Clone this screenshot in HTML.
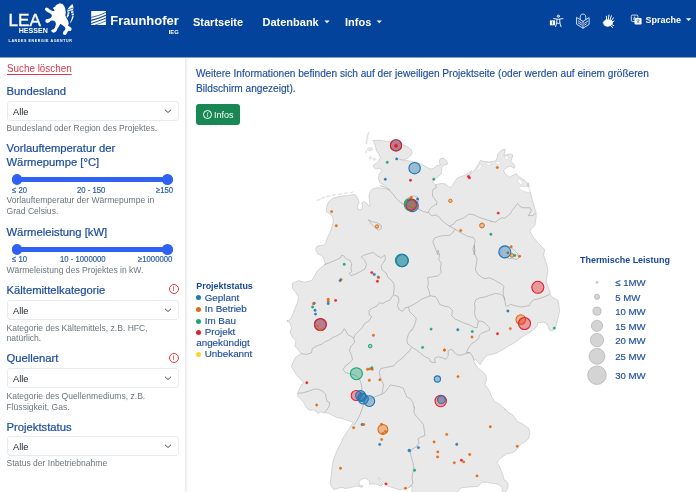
<!DOCTYPE html>
<html lang="de">
<head>
<meta charset="utf-8">
<title>Wärmepumpen Datenbank</title>
<style>
*{box-sizing:border-box;margin:0;padding:0}
html,body{width:696px;height:492px;overflow:hidden;background:#fff}
body{font-family:"Liberation Sans",sans-serif;color:#212529;position:relative}
#wrap{position:absolute;left:0;top:0;width:696px;height:492px;overflow:hidden;will-change:transform}
.abs{position:absolute;white-space:nowrap;line-height:1}
#nav{position:absolute;left:0;top:0;width:696px;height:57px;background:#04439b;z-index:5;box-shadow:0 1px 0 #82a1cd}
#nav .t{color:#fff;font-weight:700;font-size:11px}
#side{position:absolute;left:0;top:57px;width:185px;height:435px;background:#fff;box-shadow:1px 0 3px rgba(0,0,0,.13)}
.lbl{color:#1c4d9e;font-size:11.25px;-webkit-text-stroke:0.22px #1c4d9e}
.help{color:#6c757d;font-size:8.55px}
.sel{position:absolute;left:6.5px;width:172px;height:19.7px;border:1px solid #e8ebee;border-radius:3px;background:#fff}
.sel span{position:absolute;left:5.9px;top:4.7px;font-size:9.9px;transform:scaleX(0.94);transform-origin:0 0;line-height:1;color:#212529}
.sel svg{position:absolute;left:156.5px;top:7.2px}
.track{position:absolute;left:12px;width:161px;height:4.4px;background:#2f62f3;border-radius:2px}
.thumb{position:absolute;width:10.6px;height:10.6px;border-radius:50%;background:#2f62f3}
.sl{color:#285bb0;font-size:8.8px;-webkit-text-stroke:0.2px #285bb0;transform:scaleX(0.88);transform-origin:0 0}
.info{position:absolute;width:10px;height:10px;border:1px solid #e03a3a;border-radius:50%;color:#e03a3a;font-size:8px;line-height:8px;text-align:center;font-weight:400}
.main{color:#1c4d9e;font-size:10.14px;-webkit-text-stroke:0.15px #1c4d9e}
.lg{color:#1c4d9e;font-size:9.85px;-webkit-text-stroke:0.15px #1c4d9e}
.lgb{color:#17479b;font-size:8.95px;font-weight:700}
.dot{position:absolute;width:5px;height:5px;border-radius:50%}
</style>
</head>
<body>
<div id="wrap">
<div id="nav">
  <!-- LEA Hessen logo -->
  <svg class="abs" style="left:0;top:0" width="90" height="57" viewBox="0 0 90 57">
    <text x="8.6" y="25.9" font-family="Liberation Sans, sans-serif" font-size="15.6" fill="#fff" stroke="#fff" stroke-width="0.35" textLength="32.4" lengthAdjust="spacingAndGlyphs">LEA</text>
    <text x="18.7" y="33" font-family="Liberation Sans, sans-serif" font-size="6.5" font-weight="700" fill="#fff" textLength="29.2" lengthAdjust="spacingAndGlyphs">HESSEN</text>
    <text x="8.6" y="41.9" font-family="Liberation Sans, sans-serif" font-size="3.6" font-weight="700" fill="#fff" textLength="63.3" lengthAdjust="spacing">LANDES ENERGIE AGENTUR</text>
    <g fill="#fff"><path d="M57.73,4.29 L59.92,3.19 L62.48,3.93 L63.95,5.75 L65.04,7.95 L65.56,10.51 L65.77,13.07 L65.26,15.26 L65.99,17.09 L67.24,19.29 L68.34,21.48 L68.70,23.68 L67.97,25.51 L69.43,26.60 L71.26,27.70 L71.63,29.53 L70.53,30.99 L68.70,30.63 L67.60,31.72 L66.87,33.55 L65.41,35.02 L63.58,34.65 L62.85,33.19 L63.58,31.36 L65.04,29.90 L65.41,28.07 L64.31,26.60 L62.85,25.51 L61.39,24.41 L60.29,23.68 L59.56,25.14 L58.46,26.97 L57.36,28.80 L56.63,30.63 L55.53,32.09 L53.70,32.82 L51.88,32.09 L51.14,30.63 L52.24,29.53 L53.70,29.16 L54.80,27.70 L55.53,25.87 L55.90,24.04 L55.53,22.21 L54.44,21.12 L52.61,20.39 L50.78,20.75 L49.32,22.21 L47.49,22.95 L45.66,22.21 L45.29,20.75 L46.02,19.29 L47.85,18.92 L49.68,18.56 L51.14,17.46 L51.88,16.00 L51.51,14.53 L50.41,13.44 L48.95,12.70 L47.49,11.97 L46.02,10.88 L44.93,9.41 L45.29,7.95 L46.75,7.58 L48.22,8.32 L49.68,9.41 L51.14,10.51 L52.97,10.88 L54.44,10.88 L54.07,9.41 L52.97,8.32 L53.70,7.22 L55.17,6.85 L55.53,5.75 L56.63,4.66Z"/><path d="M66.51,16.73 L67.24,14.90 L67.60,12.70 L67.24,10.51 L67.97,8.68 L69.43,6.85 L71.26,5.02 L72.36,3.93 L73.09,5.39 L73.46,7.58 L73.09,9.78 L73.46,11.97 L73.82,14.53 L73.46,17.09 L72.72,19.29 L71.63,21.12 L70.90,22.95 L70.16,22.21 L70.90,20.39 L71.63,18.56 L71.99,16.36 L71.63,14.17 L70.90,11.97 L70.16,10.14 L69.43,11.61 L69.43,13.80 L68.70,16.00 L67.60,17.83Z"/><path d="M67.60,9.92 L73.31,8.02" stroke="#04439b" stroke-width="0.75" fill="none"/><path d="M67.75,12.12 L73.60,10.36" stroke="#04439b" stroke-width="0.75" fill="none"/><path d="M68.48,14.31 L73.97,12.85" stroke="#04439b" stroke-width="0.75" fill="none"/><path d="M69.21,16.51 L73.89,15.48" stroke="#04439b" stroke-width="0.75" fill="none"/></g>
  </svg>
  <!-- Fraunhofer logo -->
  <svg class="abs" style="left:90px;top:0" width="95" height="57" viewBox="90 0 95 57">
    <rect x="91.2" y="11" width="14.7" height="14" fill="#fff"/>
    <g stroke="#04439b" fill="none" stroke-linecap="butt">
      <path d="M91.2,17.4 Q99,16 105.9,12.4" stroke-width="0.8"/>
      <path d="M91.2,20.4 Q99,18.4 105.9,15.3" stroke-width="1.1"/>
      <path d="M91.2,23.6 Q99,20.8 105.9,18.2" stroke-width="1.0"/>
      <path d="M95.2,25 Q101,23 105.9,21" stroke-width="0.7"/>
    </g>
    <text x="110.3" y="24.8" font-family="Liberation Sans, sans-serif" font-size="12.2" font-weight="700" fill="#fff" textLength="68.4" lengthAdjust="spacingAndGlyphs">Fraunhofer</text>
    <text x="168.7" y="33.7" font-family="Liberation Sans, sans-serif" font-size="5.2" font-weight="700" fill="#fff" textLength="10" lengthAdjust="spacingAndGlyphs">IEG</text>
  </svg>
  <svg class="abs" style="left:320px;top:0" width="376" height="57" viewBox="320 0 376 57">
    <g fill="#fff">
      <path d="M324.4,20.6 h5.2 l-2.6,2.7z"/>
      <path d="M376.6,20.6 h5.2 l-2.6,2.7z"/>
      <path d="M686,18.3 h5.2 l-2.6,2.6z"/>
    </g>
    <!-- accessibility -->
    <g>
      <rect x="549.9" y="20.4" width="5.2" height="4.9" fill="#fff"/>
      <rect x="552.2" y="21.3" width="0.7" height="3.1" fill="#04439b"/>
      <g stroke="#fff" fill="none" stroke-width="0.9" stroke-linecap="round" stroke-linejoin="round">
        <circle cx="558.3" cy="16.2" r="1.1"/>
        <path d="M553.6,18.6 L558.3,19.3 L562.9,18.6"/>
        <path d="M556.9,19.4 L556.7,23 L555.6,26.6 M559.7,19.4 L559.9,23 L561,26.6 M556.8,23 Q558.3,24.3 559.8,23"/>
      </g>
    </g>
    <!-- easy-read book -->
    <g stroke="#fff" fill="none" stroke-width="0.8" stroke-linejoin="round" stroke-linecap="round">
      <path d="M576.9,17.6 L583,21.4 L589.1,17.6 L589.1,24.4 L583,28.2 L576.9,24.4 Z"/>
      <path d="M583,21.4 L583,28.2"/>
      <path d="M580.2,19.4 Q579.6,14 583,14 Q586.4,14 585.8,19.4"/>
      <path d="M578.4,21 L581.6,23 M578.4,23 L581.6,25 M584.6,23.2 L587.6,21.2 M584.6,25 L586.4,23.9"/>
    </g>
    <!-- sign language hands -->
    <g fill="#fff" stroke="#fff" stroke-linecap="round" stroke-linejoin="round">
      <path d="M603.2,22.2 L606,19.6 L610.6,20.2 L612.6,21.4 L612.4,23.6 L610.8,25.6 L607.4,26.6 L604.6,25.4 Z" stroke-width="0.6"/>
      <g stroke-width="1" fill="none">
        <path d="M606.6,20.4 L606.4,16.2 M608.2,20.2 L609,15 M609.8,20.4 L611.4,15.8 M611,21.2 L613.4,17.8 M612,22.6 L614,21"/>
        <path d="M610.6,25.6 L612.6,27.4 M611.8,24.6 L613.8,25.6"/>
      </g>
    </g>
    <!-- translate -->
    <g>
      <rect x="631.3" y="15.1" width="6.6" height="6.4" rx="1.2" fill="none" stroke="#fff" stroke-width="0.8"/>
      <rect x="634.5" y="18" width="7.1" height="6.5" rx="1.2" fill="#fff"/>
      <path d="M633.4,19.8 L634.6,16.6 L635.8,19.8 M633.8,18.8 h1.6" stroke="#fff" stroke-width="0.6" fill="none"/>
      <path d="M636.4,20 h3.4 M638.1,19.3 v0.7 M639.2,20 Q638.6,22 636.6,23 M637,20.8 Q637.8,22.2 639.6,23" stroke="#04439b" stroke-width="0.5" fill="none"/>
    </g>
  </svg>
  <div class="abs t" id="n1" style="left:193px;top:17.14px">Startseite</div>
  <div class="abs t" id="n2" style="left:262.5px;top:17.14px">Datenbank</div>
  <div class="abs t" id="n3" style="left:345px;top:17.14px">Infos</div>
  <div class="abs t" id="n4" style="left:645.6px;top:15.9px;font-size:9px">Sprache</div>
</div>

<div id="side">
  <div class="abs" id="s_clear" style="left:6.5px;top:5.5px;font-size:11.3px;color:#dc3545;text-decoration:underline;text-decoration-thickness:0.8px;text-underline-offset:1.6px;transform:scaleX(0.872);transform-origin:0 0">Suche löschen</div>
  <div class="abs lbl" id="l1" style="left:6.5px;top:29.24px">Bundesland</div>
  <div class="sel" style="top:44.3px"><span>Alle</span><svg width="8" height="5" viewBox="0 0 8 5"><path d="M1.2 1 L4 3.5 L6.8 1" fill="none" stroke="#343a40" stroke-width="0.9" stroke-linecap="round" stroke-linejoin="round"/></svg></div>
  <div class="abs help" id="h1" style="left:6.5px;top:67.06px">Bundesland oder Region des Projektes.</div>

  <div class="abs lbl" id="l2a" style="left:6.5px;top:86.28px">Vorlauftemperatur der</div>
  <div class="abs lbl" id="l2b" style="left:6.5px;top:99.88px">Wärmepumpe [°C]</div>
  <div class="track" style="top:120.2px"></div><div class="thumb" style="left:11.9px;top:117.1px"></div><div class="thumb" style="left:162.3px;top:117.1px"></div>
  <div class="abs sl" id="sl1a" style="left:12px;top:128.6px">≤ 20</div>
  <div class="abs sl" id="sl1b" style="left:77px;top:128.6px">20 - 150</div>
  <div class="abs sl" id="sl1c" style="left:156px;top:128.6px">≥150</div>
  <div class="abs help" id="h2a" style="left:6.5px;top:139.46px">Vorlauftemperatur der Wärmepumpe in</div>
  <div class="abs help" id="h2b" style="left:6.5px;top:149.86px">Grad Celsius.</div>

  <div class="abs lbl" id="l3" style="left:6.5px;top:169.78px">Wärmeleistung [kW]</div>
  <div class="track" style="top:190.2px"></div><div class="thumb" style="left:11.9px;top:187.1px"></div><div class="thumb" style="left:162.3px;top:187.1px"></div>
  <div class="abs sl" id="sl2a" style="left:12px;top:198.1px">≤ 10</div>
  <div class="abs sl" id="sl2b" style="left:59.7px;top:198.1px">10 - 1000000</div>
  <div class="abs sl" id="sl2c" style="left:137.5px;top:198.1px">≥1000000</div>
  <div class="abs help" id="h3" style="left:6.5px;top:209.36px">Wärmeleistung des Projektes in kW.</div>

  <div class="abs lbl" id="l4" style="left:6.5px;top:227.88px">Kältemittelkategorie</div>
  <div class="info" style="left:168.6px;top:227px">i</div>
  <div class="sel" style="top:243.3px"><span>Alle</span><svg width="8" height="5" viewBox="0 0 8 5"><path d="M1.2 1 L4 3.5 L6.8 1" fill="none" stroke="#343a40" stroke-width="0.9" stroke-linecap="round" stroke-linejoin="round"/></svg></div>
  <div class="abs help" id="h4a" style="left:6.5px;top:267.26px">Kategorie des Kältemittels, z.B. HFC,</div>
  <div class="abs help" id="h4b" style="left:6.5px;top:277.36px">natürlich.</div>

  <div class="abs lbl" id="l5" style="left:6.5px;top:296.48px">Quellenart</div>
  <div class="info" style="left:168.6px;top:295.8px">i</div>
  <div class="sel" style="top:311px"><span>Alle</span><svg width="8" height="5" viewBox="0 0 8 5"><path d="M1.2 1 L4 3.5 L6.8 1" fill="none" stroke="#343a40" stroke-width="0.9" stroke-linecap="round" stroke-linejoin="round"/></svg></div>
  <div class="abs help" id="h5a" style="left:6.5px;top:334.76px">Kategorie des Quellenmediums, z.B.</div>
  <div class="abs help" id="h5b" style="left:6.5px;top:345.66px">Flüssigkeit, Gas.</div>

  <div class="abs lbl" id="l6" style="left:6.5px;top:364.78px">Projektstatus</div>
  <div class="sel" style="top:379.2px"><span>Alle</span><svg width="8" height="5" viewBox="0 0 8 5"><path d="M1.2 1 L4 3.5 L6.8 1" fill="none" stroke="#343a40" stroke-width="0.9" stroke-linecap="round" stroke-linejoin="round"/></svg></div>
  <div class="abs help" id="h6" style="left:6.5px;top:402.46px">Status der Inbetriebnahme</div>
</div>

<div class="abs main" id="m1" style="left:196px;top:68.75px">Weitere Informationen befinden sich auf der jeweiligen Projektseite (oder werden auf einem größeren</div>
<div class="abs main" id="m2" style="left:196px;top:83.8px">Bildschirm angezeigt).</div>
<div class="abs" id="btn" style="left:196px;top:104.2px;width:43.9px;height:20.5px;background:#198754;border-radius:3px;color:#fff;font-size:9px"><span style="position:absolute;left:18px;top:6.4px">Infos</span><span style="position:absolute;left:6.9px;top:5.9px;width:9px;height:9px;border:0.9px solid #fff;border-radius:50%;font-size:6.5px;line-height:7.2px;text-align:center;font-style:italic">i</span></div>

<svg class="abs" id="map" style="left:0;top:0" width="696" height="492" viewBox="0 0 696 492">
  <g fill="#e9e9e9" stroke="#b4b4b4" stroke-width="0.5" stroke-linejoin="round">
    <path d="M373.2,140.5 L380.1,140.2 L387,141.4 L395.6,142.6 L401.4,143.5 L407.8,147.1 L411.4,149.9 L412.1,153.5 L409.9,156.3 L407.1,158.5 L403.5,159.9 L399.3,159.2 L403.5,160.7 L407.1,160.6 L410.6,161.3 L414.9,162 L421.3,164.2 L426.3,167 L430.6,169.1 L433.4,168.4 L437,165.6 L440.5,164.9 L439.1,161.3 L440.5,158.5 L444.1,158.5 L446.9,161.3 L447.6,164.2 L444.1,164.9 L441.9,167 L441.7,170.6 L441.2,174.1 L437.7,177 L434.1,179.1 L432.7,181.9 L435.5,184.8 L437.7,184.1 L441.9,183.4 L445.5,184.1 L448.3,186.2 L451.2,187.6 L453.3,184.1 L455.5,180.5 L457.6,177.7 L461.9,176.3 L466.1,174.8 L469,172.7 L471.8,170.6 L470,174.7 L474.6,170.1 L478.1,164.9 L480.4,160.3 L483.9,161.4 L488.5,162 L493.1,161.4 L496,160.8 L497.2,157.4 L497.8,153.9 L500.1,151.6 L502.4,149.8 L505.3,149.3 L504.7,152.7 L503.8,155.6 L507,154.5 L510.5,153.9 L512.8,155 L511.9,158.5 L510.7,161.4 L513.4,163.7 L515.1,166 L514,168.4 L511.7,166.9 L509.4,166.4 L507,167.5 L505.3,168.9 L503.6,170.3 L504.7,173 L507,175.3 L508.8,177.6 L511.7,175.9 L514.6,174.4 L516.3,173.6 L518.6,176.5 L522.1,178.8 L525.6,181.1 L528.4,184 L529.6,186.3 L527.9,187.5 L528.4,182.8 L527.3,186.4 L530.5,192.8 L532,198.5 L533.4,203.5 L534.8,208.4 L536.2,212.7 L536.2,217 L535.5,221.3 L534.8,225.5 L532,228.4 L529.8,230.5 L531.3,234.1 L534.1,238.3 L537.7,242.6 L541.2,246.1 L544.8,250 L544.5,250.2 L543.6,255.4 L545.4,260.5 L547.1,265.7 L547.9,270.9 L547.1,276.1 L546.2,281.3 L547.9,286.5 L549.7,290.8 L550.5,295.1 L553,297.5 L557.6,299.9 L559,305.6 L559.5,311.3 L558.3,317 L556.9,322.7 L555.5,326.9 L554.1,329.8 L551.2,330.9 L549.1,329.8 L548.1,326.2 L546.2,323.4 L543.4,322 L540.5,322.7 L537.7,322.4 L537.3,325.5 L535.6,327.7 L533.4,329.8 L530.6,331.9 L527.7,333.8 L524.2,335.5 L521.3,337.6 L518.5,339.7 L515,342.4 L511.1,344.7 L507.4,346.6 L503.8,349 L500.4,350.9 L496.1,353.5 L491.8,354.4 L487.5,355.2 L484,358.7 L481.5,362.1 L480.1,364.7 L478,362.1 L475.4,359.5 L473.7,361.3 L476.3,365.6 L478.9,369 L482.3,371.6 L485.8,375.1 L486.6,379.4 L484.9,384.6 L487.5,388 L490.1,392.4 L491.8,397.5 L495.3,401.9 L499.6,404.4 L503.9,407.9 L505.6,410 L504.8,408.7 L508.2,412.2 L512.5,414.8 L515.1,418.2 L517.7,421.7 L522,423.4 L525.5,426 L528.9,428.6 L529.8,432.9 L528.9,438.1 L525.5,441.5 L522,443.3 L518.6,446.7 L516,450.2 L512.5,452.8 L507.4,453.6 L503,456.2 L498.7,459.7 L497,463.1 L499.6,466.6 L501.3,470.9 L503,475.2 L503.9,479.5 L506.5,481.3 L508.2,484.7 L507.4,489 L505.6,492 L505.6,492 L504,497 L502,497 L502.4,488.1 L498.9,484.5 L494.4,483.6 L489.1,482.8 L483.7,481.9 L481.1,482.8 L478.4,486.3 L473,486.7 L466.8,487.2 L460.6,488.1 L457,492 L455,497 L412,497 L412,485.9 L407.6,488.1 L403.3,489.1 L399,489.7 L396.1,488.8 L391.8,487.4 L387.5,485.9 L385.4,484.2 L381.8,480.9 L378.9,477.3 L378.2,478 L380.3,481.6 L383.2,484.5 L380.3,485.9 L377.5,484.5 L373.2,483.8 L369.6,484.5 L369.6,481.6 L368.1,479.5 L364.5,478 L360.9,479.5 L358.8,482.3 L359.5,485.2 L363.1,485.9 L361.7,487.6 L358.1,485.9 L354.5,486.6 L350.2,487.6 L345.9,488.5 L341.6,487.4 L337.2,488.5 L333.6,489.5 L331.5,486.6 L330.1,483 L330.8,478.7 L331.5,473 L332.2,467.2 L332.9,461.5 L335.1,455.7 L337.2,450 L340.4,444.1 L343,438.1 L346.4,432.9 L349.9,427.7 L353.3,422.5 L349.7,421.1 L345.4,419.7 L341.2,418.3 L336.9,417.6 L332.6,415.5 L328.4,413.3 L324.1,412.6 L320.5,411.9 L317.7,413.3 L316.3,411.2 L313.4,409.8 L310.6,410.5 L307.7,409.1 L305.6,406.2 L303.5,401.9 L300.6,399.1 L297.8,396.3 L297.8,393.4 L299.2,389.1 L301.3,385.6 L303.5,382.7 L301.3,379.9 L298.5,377 L295.6,373.5 L293.5,369.9 L291.4,366.4 L293.3,361.5 L295.9,357.1 L301.1,353.7 L298.5,350.2 L295,345.9 L295.9,340.7 L292.5,337.3 L289.9,332.1 L291.6,327.8 L289.9,323.5 L287.3,320 L287.3,322 L290.7,318.6 L293.3,313.4 L295,308.2 L297.6,302.2 L298.5,297 L295.9,292.7 L292.5,288.4 L292.5,283.2 L298.5,280.6 L304.5,282.3 L311.5,280.6 L314,277.1 L316.6,272 L320.9,267.6 L325.3,264.2 L324.4,259.9 L321.8,255.5 L317.5,253.8 L317.3,252.9 L315.5,249.4 L317.3,246 L324.2,245.1 L325.9,242.5 L327.6,237.4 L330.2,232.2 L332,227 L333.3,221.6 L332.6,216.4 L329.4,213.8 L326.2,211.2 L326.8,206 L328.8,201.5 L332.6,198.3 L335.9,197.3 L341,196.3 L347.5,195.4 L352.7,194.7 L355.3,194.7 L357.6,198.3 L359.2,202.4 L357.3,206 L357.9,209.3 L361.1,209.9 L362.5,206.7 L361.7,202.8 L363.7,201.5 L366.3,202.8 L368.2,205.4 L370.2,206 L369.5,200.9 L368.9,195.7 L370.2,191.8 L372.1,189.2 L376,187.9 L381.2,187.9 L385.7,188.5 L389.2,190 L389.6,189.8 L387,187.2 L383.5,184.6 L380.1,182.9 L378.4,178.5 L379.2,174.2 L381.8,170.8 L380.1,168.2 L375.8,169 L372.8,166.5 L374,164.7 L378.4,162.1 L380.1,157.8 L379.2,154.4 L376.6,150.9 L375.3,145.7 L373.2,140.5Z"/>
  </g>
  <path d="M368.3,132.3 L367.1,135.4 L366.3,139.7 L365.9,144 L367,144 L367.3,139.7 L368.3,135.4 L369.4,132.6Z M320.61,199.35 L320.4,199.64 L319.73,199.97 L318.78,200.27 L317.79,200.46 L317.04,200.48 L316.73,200.32 L316.93,200.04 L317.6,199.7 L318.56,199.4 L319.54,199.22 L320.29,199.2Z M325.14,197.41 L324.93,197.7 L324.26,198.03 L323.3,198.33 L322.32,198.52 L321.57,198.54 L321.25,198.38 L321.46,198.1 L322.13,197.76 L323.09,197.46 L324.07,197.28 L324.82,197.26Z M330.31,195.86 L330.11,196.14 L329.43,196.48 L328.48,196.78 L327.49,196.97 L326.74,196.98 L326.43,196.83 L326.63,196.55 L327.31,196.21 L328.26,195.91 L329.25,195.73 L330,195.71Z M336.13,194.57 L335.93,194.85 L335.26,195.19 L334.3,195.49 L333.32,195.67 L332.57,195.69 L332.25,195.54 L332.46,195.25 L333.13,194.92 L334.08,194.62 L335.07,194.43 L335.82,194.41Z M341.95,193.53 L341.75,193.82 L341.08,194.15 L340.12,194.45 L339.14,194.64 L338.39,194.65 L338.07,194.5 L338.28,194.22 L338.95,193.88 L339.9,193.58 L340.89,193.4 L341.64,193.38Z M347.78,192.63 L347.57,192.91 L346.9,193.25 L345.94,193.55 L344.96,193.73 L344.21,193.75 L343.89,193.6 L344.1,193.31 L344.77,192.98 L345.73,192.67 L346.71,192.49 L347.46,192.47Z M353.6,191.85 L353.39,192.13 L352.72,192.47 L351.76,192.77 L350.78,192.96 L350.03,192.97 L349.72,192.82 L349.92,192.54 L350.59,192.2 L351.55,191.9 L352.53,191.72 L353.28,191.7Z M372.7,149.2 L372.34,150.1 L371.35,150.76 L370,151 L368.65,150.76 L367.66,150.1 L367.3,149.2 L367.66,148.3 L368.65,147.64 L370,147.4 L371.35,147.64 L372.34,148.3Z M366.76,151.81 L366.41,152.53 L366.01,153 L365.65,153.1 L365.44,152.8 L365.44,152.17 L365.64,151.39 L365.99,150.67 L366.39,150.2 L366.75,150.1 L366.96,150.4 L366.96,151.03Z M372.1,157.9 L371.9,158.5 L371.35,158.94 L370.6,159.1 L369.85,158.94 L369.3,158.5 L369.1,157.9 L369.3,157.3 L369.85,156.86 L370.6,156.7 L371.35,156.86 L371.9,157.3Z M375.8,159.3 L375.61,159.9 L375.1,160.34 L374.4,160.5 L373.7,160.34 L373.19,159.9 L373,159.3 L373.19,158.7 L373.7,158.26 L374.4,158.1 L375.1,158.26 L375.61,158.7Z" fill="#e6e6e6" stroke="#cfcfcf" stroke-width="0.3"/>
  <path d="M479.3,165.5 L481,163.7 L481.6,166 L479.8,168.9 L478.1,171 L477.2,170.3Z M485.6,162.9 L490.3,162.9 L491.4,164.5 L488.5,165.2 L486.2,164.5Z M495.7,161.8 L498.4,161.4 L500.3,163.1 L498.9,164.5 L496.4,164.1Z M504.7,156.2 L507.6,156.2 L508.8,158.5 L506.5,159.4 L504.7,158.3Z M518,178.8 L520.9,179.9 L522.7,182.8 L521.5,184.6 L519.2,183.4 L517.7,181.1Z M518.4,187.1 L520.6,186.3 L524.1,186.8 L527.3,186.3 L529.1,188.5 L530.3,192.5 L526.3,192.1 L522,190.7 L519.2,188.8Z" fill="#fff" stroke="#c8c8c8" stroke-width="0.4" stroke-linejoin="round"/>
  <path d="M380,185.5 L385.2,187.3 L389.5,189.9 L393,194.2 L396.4,198.5 L399.9,202 L404.2,204.5 L411.1,207.1 L418,208.9 L423.2,211.5 L428.4,212.8 M435.5,184.8 L436.3,187.6 L433.4,189.1 L432.3,191.9 L432.7,196.2 L434.8,199 L437,201.9 L436.3,205 L435.3,204.5 L431.8,207.1 L429.2,209.7 L428.4,212.8 M428.4,212.8 L431.8,215.8 L436.1,214.9 L439.6,217.5 L442.2,220.9 L445.6,223.5 L449.1,226.1 M449.1,226.1 L453.4,224.4 L456,220.9 L460.3,219.2 L464.6,217.5 L468.9,214 L474.1,214.9 L479.3,217.5 L484.5,219.2 L490.5,220.9 L490,221.3 L495.7,222 L498.5,219.8 L502.1,217.7 L504.2,218.4 L507.1,216.3 L509.9,214.1 L512,210.6 L514.9,207 L517.7,203.5 L519.2,205.6 L522,207.7 L525.6,207.7 L529.8,207.7 L531.3,210.6 L528.4,215.6 L532.7,215.6 L535.5,213.4 M449.1,226.1 L454.3,228.7 L458.6,231.3 L462.9,233.9 L468.1,236.5 L473.3,237.4 L475,240.8 L474.1,246 L475,251.2 L474.1,255 L474.5,245 L472.8,249.3 L474.5,253.6 L477.1,258.8 L476.3,264 L475.4,270 L478,274.4 L481.5,277 L484.9,278.7 L489.2,277.8 L493.5,279.5 L497.9,282.1 L501.3,283.9 L503.9,286.5 L503,291.6 L503.9,296.8 L504.8,300.3 M455.1,229.1 L452.5,233 L449.1,235.6 L443.9,235.6 L438.7,236.5 L434.4,238.2 L432.7,241.7 L434.4,246 L436.1,250.3 L437.9,255 L437.9,250 L439.6,255.2 L438.7,259.5 L441.3,263 L440.4,268.1 L441.3,272.5 L437.9,275.9 L432.7,276.8 L427.5,277.6 L428.4,282.8 L427.5,287.1 L429.2,291.5 L430.1,295.8 M430.1,295.8 L425.8,297.5 L421.5,299.2 L418,301.8 L413.7,304.4 L408.5,307 M408.5,307 L405,307.9 L402.5,311.3 L399,309.6 L397.3,305.3 L399,300.9 L398.1,296.6 L393.8,294.9 M324.2,264.7 L331.1,262.1 L337.1,259.5 L340.6,257.8 L341.5,255.2 L344,256 L345.8,258.6 L350.1,260.4 L351.8,263.8 L350.9,268.1 L351.8,271.6 L349.2,273.3 L350.9,275.6 L355.3,274.2 L360.4,271.6 L364.8,269 L366.5,264.7 L364.8,260.4 L361.3,256.9 L363.9,255.2 L369.1,253.5 L373.4,252.6 L377.7,256 L381.2,257.8 L384.6,255.2 L385.5,258.6 L383.8,262.1 L381.2,265.5 L382,269.9 L386.4,273.3 L388.1,277.6 L391.5,280.2 L394.1,284.5 L394.1,289.7 L393.3,294.9 M393.3,294.9 L389.8,300.1 L385.5,301.8 L382.9,303.5 L379.4,302.7 L376.9,306.1 L372.5,307.9 L369.1,310.4 L369.1,314.8 L371.7,316.5 L369.1,320.8 L364.8,323.4 L362.2,327.7 L358.7,331.2 L355.3,334.6 L353.8,338.1 M301.1,353.7 L306.3,354.5 L311.5,352.8 L312.3,348.5 L316.6,345.9 L321.8,344.2 L325.3,341.6 L329.6,339.9 L333,337.3 L337.4,335.5 L341.7,333 L344.3,328.6 L346,331.2 L347.7,334.7 L351.2,336.4 L353.8,338.1 M353.8,338.1 L354.6,342.5 L351.2,345.9 L349.4,350.2 L351.6,355.5 L352.5,359.9 L349,363.3 L345.5,365.9 L343,369.4 L345.5,372.8 L349.9,373.7 L355.9,375.4 L359.4,378.9 L361.1,383.2 L362,388.4 L361.1,391.8 L362.8,397 L363.7,403.9 M363.7,403.9 L362,409.1 L360.2,414.3 L357.6,419.4 L354.2,425 M297.8,393.4 L303.5,392.7 L308.4,391.3 L314.1,389.1 L318.4,389.1 L322.7,391.3 L325.5,394.1 L326.2,397.7 L326.9,401.2 L329.8,402.7 L329.1,406.2 L326.9,409.8 L324.1,412.6 M363.7,403.9 L368,399.6 L372.3,397.9 L376.6,396.1 L381.8,394.4 M381.8,394.4 L385.3,391.8 L388.7,387.5 L390.4,384.9 L394.8,385.8 L399.1,386.6 L403.4,388.4 L405.1,392.7 L406.9,397 L410.3,398.7 L412.9,402.2 L413.8,407.4 L414.6,407 L413.8,412.2 L416.4,416.5 L419.8,420 L423.3,424.3 L424.1,429.5 L425,435.5 L420.7,437.2 L418.1,439 L418.9,443.3 L416.4,446.7 L412,449.3 L410.3,451.9 L411.2,457.1 L412.9,462.3 L413.8,467.4 L412.9,472.6 L412,477.8 L412.9,483 L411.2,485.6 L408.6,487.8 M381.8,394.4 L382.7,390.1 L383.5,384.9 L381.8,380.6 L380.1,376.3 L379.2,372 L380.9,368.5 L385.3,367.6 L389.6,366.8 L393.9,365.9 L396.5,362.5 L399.9,359.9 L403.4,357.3 L406,353.8 L409.4,351.2 L411.2,347.8 M408.5,307 L409.4,311.3 L412.8,314.8 L416.3,318.2 L415.4,322.5 L413.7,326.9 L412,330.3 L411.1,330 L408.5,334.3 L406.8,339.5 L407.6,343.8 L412,347.3 M412,347.3 L416.3,349.9 L420.6,353.3 L424.9,356.8 L429.2,358.5 L430.9,362 L435.3,362.8 L434.4,358.5 L437.9,356.8 L442.2,357.6 L445.6,359.4 L448.2,355.9 L448.2,350.7 L451.7,349 L454.3,352.5 L457.7,355 L462,355 L466.4,353.3 L469.8,352.5 M469.8,352.5 L472.4,355.9 L474.1,360.2 M478.2,321.2 L481.2,321.2 L484.3,322.4 L486.7,324.9 L489.1,327.3 L489.8,329.8 L487.3,331 L484.3,332.2 L481.2,333.4 L479.4,335.2 L478.8,337.7 L477,340.1 L474.5,342 L472.1,343.2 L470.2,345.6 L468.4,348 L467.2,350.5 L466.6,352.9 L469.8,352.5 M430.1,295.8 L435.3,296.6 L437.9,300.1 L439.6,304.4 L443.9,306.1 L449.1,307 L452.5,310.4 L451.7,315.6 L455.1,319.1 L458.7,320.6 L462.3,322.4 L466,323.7 L469.6,324.9 L473.3,327 L477,327.9 L477.6,324.9 L478.2,321.2 M478.2,321.2 L475.7,317.6 L474.5,313.3 L475.1,308.4 L474.5,303.5 L475.7,299.9 L479.4,298 L485.5,296.8 L490.1,295.1 L495.3,293.4 L500.4,294.2 L503.9,296.8 L504.8,300.3 M504.8,300.3 L505.7,305.6 L507.8,306.3 L510.7,304.2 L514.2,305.6 L517.8,306.3 L521.3,307 L525.6,306.3 L529.2,305.6 L530.6,302.8 L533.4,299.9 L537,299.2 L541.3,297.8 L545.5,296.4 L549.8,294.2 M501.3,247.6 L506.5,245.9 L510.8,247.6 L514.3,250.2 L517.7,253.6 L518.6,258 L516,259.7 L512.5,258 L509.1,258.8 L506.5,257.1 L503,258 L500.4,254.5 L499.6,251 L501.3,247.6 M368.2,219.7 L372.5,221.8 L376.9,222.7 L381.2,225.3 L381.2,228.7 L378.6,230.1 L375.1,227.9 L371.7,224.4 L368.2,219.7 M404.2,204.5 L405,200.2 L408.5,197.6 L412.8,195.9 L417.1,196.8 L418.9,200.2 L417.1,204.5 L418.9,208.9" fill="none" stroke="#999" stroke-width="0.55" stroke-linejoin="round"/>
  <g id="dots"><circle cx="396" cy="145.4" r="5.6" fill="#1f77b4" fill-opacity="0.4" stroke="#1f77b4" stroke-width="1.1"/>
<circle cx="396" cy="145.4" r="5.6" fill="#e3202e" fill-opacity="0.4" stroke="#e3202e" stroke-width="1.1"/>
<circle cx="414.6" cy="168.2" r="5.7" fill="#1f77b4" fill-opacity="0.4" stroke="#1f77b4" stroke-width="1.1"/>
<circle cx="412.3" cy="205.6" r="6.0" fill="#1f77b4" fill-opacity="0.4" stroke="#1f77b4" stroke-width="1.1"/>
<circle cx="410.3" cy="204.5" r="6.0" fill="#17a673" fill-opacity="0.4" stroke="#17a673" stroke-width="1.1"/>
<circle cx="411.3" cy="204.9" r="5.5" fill="#e3202e" fill-opacity="0.4" stroke="#e3202e" stroke-width="1.1"/>
<circle cx="401.7" cy="260.4" r="6.3" fill="#17a673" fill-opacity="0.4" stroke="#17a673" stroke-width="1.1"/>
<circle cx="402.3" cy="260.6" r="6.1" fill="#1f77b4" fill-opacity="0.4" stroke="#1f77b4" stroke-width="1.1"/>
<circle cx="320.4" cy="324.5" r="5.8" fill="#1f77b4" fill-opacity="0.4" stroke="#1f77b4" stroke-width="1.1"/>
<circle cx="320.4" cy="324.5" r="6" fill="#e3202e" fill-opacity="0.4" stroke="#e3202e" stroke-width="1.1"/>
<circle cx="356.4" cy="373.7" r="6" fill="#17a673" fill-opacity="0.4" stroke="#17a673" stroke-width="1.1"/>
<circle cx="356.2" cy="395.5" r="5.0" fill="#e3202e" fill-opacity="0.4" stroke="#e3202e" stroke-width="1.1"/>
<circle cx="360.6" cy="395.6" r="5.0" fill="#1f77b4" fill-opacity="0.4" stroke="#1f77b4" stroke-width="1.1"/>
<circle cx="363.3" cy="399" r="5.0" fill="#1f77b4" fill-opacity="0.4" stroke="#1f77b4" stroke-width="1.1"/>
<circle cx="369.3" cy="401.1" r="5.4" fill="#1f77b4" fill-opacity="0.4" stroke="#1f77b4" stroke-width="1.1"/>
<circle cx="362" cy="397.2" r="4.2" fill="#1f77b4" fill-opacity="0.4" stroke="#1f77b4" stroke-width="1.1"/>
<circle cx="382.9" cy="429.4" r="4.9" fill="#de6b0e" fill-opacity="0.4" stroke="#de6b0e" stroke-width="1.1"/>
<circle cx="437.4" cy="379" r="3.1" fill="#1f77b4" fill-opacity="0.4" stroke="#1f77b4" stroke-width="1.1"/>
<circle cx="440.7" cy="401" r="5.7" fill="#e3202e" fill-opacity="0.4" stroke="#e3202e" stroke-width="1.1"/>
<circle cx="441.4" cy="399.7" r="3.8" fill="#1f77b4" fill-opacity="0.4" stroke="#1f77b4" stroke-width="1.1"/>
<circle cx="504.8" cy="251.9" r="6" fill="#1f77b4" fill-opacity="0.4" stroke="#1f77b4" stroke-width="1.1"/>
<circle cx="537.8" cy="287.3" r="6" fill="#e3202e" fill-opacity="0.4" stroke="#e3202e" stroke-width="1.1"/>
<circle cx="520.8" cy="319.6" r="4.8" fill="#de6b0e" fill-opacity="0.4" stroke="#de6b0e" stroke-width="1.1"/>
<circle cx="524.5" cy="323.5" r="6" fill="#e3202e" fill-opacity="0.4" stroke="#e3202e" stroke-width="1.1"/>
<circle cx="377" cy="226.5" r="1.7" fill="#de6b0e" fill-opacity="0.35" stroke="#de6b0e" stroke-width="1.0"/>
<circle cx="450.4" cy="200.8" r="1.7" fill="#de6b0e" fill-opacity="0.35" stroke="#de6b0e" stroke-width="1.0"/>
<circle cx="482" cy="225.5" r="2.4" fill="#de6b0e" fill-opacity="0.35" stroke="#de6b0e" stroke-width="1.0"/>
<circle cx="370.2" cy="346.1" r="1.8" fill="#17a673" fill-opacity="0.35" stroke="#17a673" stroke-width="1.0"/>
<circle cx="512" cy="255.4" r="1.8" fill="#de6b0e" fill-opacity="0.35" stroke="#de6b0e" stroke-width="1.0"/>
<circle cx="396.7" cy="158.9" r="1.2" fill="#1f77b4" fill-opacity="0.92" stroke="#1f77b4" stroke-width="0.4"/>
<circle cx="387.2" cy="162.3" r="1.2" fill="#17a673" fill-opacity="0.92" stroke="#17a673" stroke-width="0.4"/>
<circle cx="385.3" cy="179.2" r="1.2" fill="#1f77b4" fill-opacity="0.92" stroke="#1f77b4" stroke-width="0.4"/>
<circle cx="410.5" cy="180.3" r="1.2" fill="#e3202e" fill-opacity="0.92" stroke="#e3202e" stroke-width="0.4"/>
<circle cx="433.8" cy="179.2" r="1.2" fill="#17a673" fill-opacity="0.92" stroke="#17a673" stroke-width="0.4"/>
<circle cx="411.3" cy="197.4" r="1.2" fill="#de6b0e" fill-opacity="0.92" stroke="#de6b0e" stroke-width="0.4"/>
<circle cx="417.6" cy="199" r="1.2" fill="#1f77b4" fill-opacity="0.92" stroke="#1f77b4" stroke-width="0.4"/>
<circle cx="406.4" cy="202.6" r="1.2" fill="#17a673" fill-opacity="0.92" stroke="#17a673" stroke-width="0.4"/>
<circle cx="331.6" cy="211.6" r="1.2" fill="#de6b0e" fill-opacity="0.92" stroke="#de6b0e" stroke-width="0.4"/>
<circle cx="336.3" cy="225.8" r="1.2" fill="#de6b0e" fill-opacity="0.92" stroke="#de6b0e" stroke-width="0.4"/>
<circle cx="344.2" cy="264.3" r="1.2" fill="#17a673" fill-opacity="0.92" stroke="#17a673" stroke-width="0.4"/>
<circle cx="341.1" cy="279.4" r="1.2" fill="#de6b0e" fill-opacity="0.92" stroke="#de6b0e" stroke-width="0.4"/>
<circle cx="340.1" cy="280.6" r="1.2" fill="#1f77b4" fill-opacity="0.92" stroke="#1f77b4" stroke-width="0.4"/>
<circle cx="371.8" cy="272.6" r="1.2" fill="#e3202e" fill-opacity="0.92" stroke="#e3202e" stroke-width="0.4"/>
<circle cx="374.3" cy="274.4" r="1.2" fill="#1f77b4" fill-opacity="0.92" stroke="#1f77b4" stroke-width="0.4"/>
<circle cx="378.2" cy="277.1" r="1.2" fill="#1f77b4" fill-opacity="0.92" stroke="#1f77b4" stroke-width="0.4"/>
<circle cx="378.6" cy="277.6" r="1.2" fill="#de6b0e" fill-opacity="0.92" stroke="#de6b0e" stroke-width="0.4"/>
<circle cx="377.4" cy="281.3" r="1.2" fill="#e3202e" fill-opacity="0.92" stroke="#e3202e" stroke-width="0.4"/>
<circle cx="328.2" cy="299.2" r="1.2" fill="#de6b0e" fill-opacity="0.92" stroke="#de6b0e" stroke-width="0.4"/>
<circle cx="328.2" cy="301.3" r="1.2" fill="#de6b0e" fill-opacity="0.92" stroke="#de6b0e" stroke-width="0.4"/>
<circle cx="328.2" cy="303.5" r="1.2" fill="#1f77b4" fill-opacity="0.92" stroke="#1f77b4" stroke-width="0.4"/>
<circle cx="335.6" cy="300.4" r="1.2" fill="#e3202e" fill-opacity="0.92" stroke="#e3202e" stroke-width="0.4"/>
<circle cx="314.2" cy="303.3" r="1.2" fill="#1f77b4" fill-opacity="0.92" stroke="#1f77b4" stroke-width="0.4"/>
<circle cx="313.4" cy="303.7" r="1.2" fill="#de6b0e" fill-opacity="0.92" stroke="#de6b0e" stroke-width="0.4"/>
<circle cx="312.6" cy="307" r="1.2" fill="#17a673" fill-opacity="0.92" stroke="#17a673" stroke-width="0.4"/>
<circle cx="315" cy="310.3" r="1.2" fill="#1f77b4" fill-opacity="0.92" stroke="#1f77b4" stroke-width="0.4"/>
<circle cx="315.5" cy="314.1" r="1.2" fill="#1f77b4" fill-opacity="0.92" stroke="#1f77b4" stroke-width="0.4"/>
<circle cx="317.8" cy="326" r="1.2" fill="#de6b0e" fill-opacity="0.92" stroke="#de6b0e" stroke-width="0.4"/>
<circle cx="320.4" cy="329.8" r="1.2" fill="#de6b0e" fill-opacity="0.92" stroke="#de6b0e" stroke-width="0.4"/>
<circle cx="373.4" cy="335.3" r="1.2" fill="#de6b0e" fill-opacity="0.92" stroke="#de6b0e" stroke-width="0.4"/>
<circle cx="367.6" cy="369.2" r="1.2" fill="#de6b0e" fill-opacity="0.92" stroke="#de6b0e" stroke-width="0.4"/>
<circle cx="369.8" cy="368.9" r="1.2" fill="#de6b0e" fill-opacity="0.92" stroke="#de6b0e" stroke-width="0.4"/>
<circle cx="372.2" cy="369.2" r="1.2" fill="#de6b0e" fill-opacity="0.92" stroke="#de6b0e" stroke-width="0.4"/>
<circle cx="371.9" cy="367.8" r="1.2" fill="#17a673" fill-opacity="0.92" stroke="#17a673" stroke-width="0.4"/>
<circle cx="369.3" cy="380.3" r="1.2" fill="#de6b0e" fill-opacity="0.92" stroke="#de6b0e" stroke-width="0.4"/>
<circle cx="379.8" cy="379.8" r="1.2" fill="#de6b0e" fill-opacity="0.92" stroke="#de6b0e" stroke-width="0.4"/>
<circle cx="306.8" cy="382.7" r="1.2" fill="#e3202e" fill-opacity="0.92" stroke="#e3202e" stroke-width="0.4"/>
<circle cx="316.7" cy="405" r="1.2" fill="#de6b0e" fill-opacity="0.92" stroke="#de6b0e" stroke-width="0.4"/>
<circle cx="422.6" cy="347.4" r="1.2" fill="#17a673" fill-opacity="0.92" stroke="#17a673" stroke-width="0.4"/>
<circle cx="444.4" cy="350.1" r="1.2" fill="#de6b0e" fill-opacity="0.92" stroke="#de6b0e" stroke-width="0.4"/>
<circle cx="353.6" cy="427.7" r="1.2" fill="#de6b0e" fill-opacity="0.92" stroke="#de6b0e" stroke-width="0.4"/>
<circle cx="362.1" cy="424.5" r="1.2" fill="#1f77b4" fill-opacity="0.92" stroke="#1f77b4" stroke-width="0.4"/>
<circle cx="363.8" cy="424.5" r="1.2" fill="#de6b0e" fill-opacity="0.92" stroke="#de6b0e" stroke-width="0.4"/>
<circle cx="381.5" cy="424.3" r="1.2" fill="#de6b0e" fill-opacity="0.92" stroke="#de6b0e" stroke-width="0.4"/>
<circle cx="385.5" cy="431.5" r="1.2" fill="#de6b0e" fill-opacity="0.92" stroke="#de6b0e" stroke-width="0.4"/>
<circle cx="382.8" cy="433.5" r="1.2" fill="#de6b0e" fill-opacity="0.92" stroke="#de6b0e" stroke-width="0.4"/>
<circle cx="381.6" cy="439.4" r="1.2" fill="#de6b0e" fill-opacity="0.92" stroke="#de6b0e" stroke-width="0.4"/>
<circle cx="379.7" cy="444.4" r="1.2" fill="#1f77b4" fill-opacity="0.92" stroke="#1f77b4" stroke-width="0.4"/>
<circle cx="340.5" cy="468.2" r="1.2" fill="#de6b0e" fill-opacity="0.92" stroke="#de6b0e" stroke-width="0.4"/>
<circle cx="386" cy="483.9" r="1.2" fill="#e3202e" fill-opacity="0.92" stroke="#e3202e" stroke-width="0.4"/>
<circle cx="409.3" cy="450.5" r="1.45" fill="#1f77b4" fill-opacity="0.92" stroke="#1f77b4" stroke-width="0.4"/>
<circle cx="418.4" cy="447.6" r="1.2" fill="#1f77b4" fill-opacity="0.92" stroke="#1f77b4" stroke-width="0.4"/>
<circle cx="414.6" cy="470.2" r="1.2" fill="#17a673" fill-opacity="0.92" stroke="#17a673" stroke-width="0.4"/>
<circle cx="405.5" cy="488.3" r="1.2" fill="#de6b0e" fill-opacity="0.92" stroke="#de6b0e" stroke-width="0.4"/>
<circle cx="446.7" cy="434.4" r="1.2" fill="#de6b0e" fill-opacity="0.92" stroke="#de6b0e" stroke-width="0.4"/>
<circle cx="434.1" cy="441.9" r="1.2" fill="#de6b0e" fill-opacity="0.92" stroke="#de6b0e" stroke-width="0.4"/>
<circle cx="437.8" cy="451.9" r="1.2" fill="#de6b0e" fill-opacity="0.92" stroke="#de6b0e" stroke-width="0.4"/>
<circle cx="437.6" cy="456.9" r="1.2" fill="#de6b0e" fill-opacity="0.92" stroke="#de6b0e" stroke-width="0.4"/>
<circle cx="490.3" cy="426.7" r="1.2" fill="#de6b0e" fill-opacity="0.92" stroke="#de6b0e" stroke-width="0.4"/>
<circle cx="456.8" cy="444.3" r="1.2" fill="#1f77b4" fill-opacity="0.92" stroke="#1f77b4" stroke-width="0.4"/>
<circle cx="469.7" cy="454.5" r="1.2" fill="#de6b0e" fill-opacity="0.92" stroke="#de6b0e" stroke-width="0.4"/>
<circle cx="461.4" cy="460.2" r="1.2" fill="#e3202e" fill-opacity="0.92" stroke="#e3202e" stroke-width="0.4"/>
<circle cx="463.7" cy="461.9" r="1.2" fill="#de6b0e" fill-opacity="0.92" stroke="#de6b0e" stroke-width="0.4"/>
<circle cx="454.3" cy="462.8" r="1.2" fill="#de6b0e" fill-opacity="0.92" stroke="#de6b0e" stroke-width="0.4"/>
<circle cx="477" cy="475.9" r="1.2" fill="#de6b0e" fill-opacity="0.92" stroke="#de6b0e" stroke-width="0.4"/>
<circle cx="517.2" cy="446.2" r="1.2" fill="#de6b0e" fill-opacity="0.92" stroke="#de6b0e" stroke-width="0.4"/>
<circle cx="457.8" cy="329.7" r="1.2" fill="#1f77b4" fill-opacity="0.92" stroke="#1f77b4" stroke-width="0.4"/>
<circle cx="472.3" cy="331.5" r="1.2" fill="#17a673" fill-opacity="0.92" stroke="#17a673" stroke-width="0.4"/>
<circle cx="472" cy="337" r="1.2" fill="#de6b0e" fill-opacity="0.92" stroke="#de6b0e" stroke-width="0.4"/>
<circle cx="497.5" cy="333.7" r="1.2" fill="#e3202e" fill-opacity="0.92" stroke="#e3202e" stroke-width="0.4"/>
<circle cx="510.3" cy="328.6" r="1.2" fill="#de6b0e" fill-opacity="0.92" stroke="#de6b0e" stroke-width="0.4"/>
<circle cx="554.3" cy="328.1" r="1.2" fill="#17a673" fill-opacity="0.92" stroke="#17a673" stroke-width="0.4"/>
<circle cx="444.5" cy="350" r="1.2" fill="#de6b0e" fill-opacity="0.92" stroke="#de6b0e" stroke-width="0.4"/>
<circle cx="458" cy="376.6" r="1.2" fill="#de6b0e" fill-opacity="0.92" stroke="#de6b0e" stroke-width="0.4"/>
<circle cx="431.1" cy="329.1" r="1.2" fill="#17a673" fill-opacity="0.92" stroke="#17a673" stroke-width="0.4"/>
<circle cx="511.2" cy="246.7" r="1.2" fill="#de6b0e" fill-opacity="0.92" stroke="#de6b0e" stroke-width="0.4"/>
<circle cx="514.8" cy="255.4" r="1.2" fill="#17a673" fill-opacity="0.92" stroke="#17a673" stroke-width="0.4"/>
<circle cx="519.6" cy="256.2" r="1.2" fill="#de6b0e" fill-opacity="0.92" stroke="#de6b0e" stroke-width="0.4"/>
<circle cx="507.9" cy="311" r="1.2" fill="#1f77b4" fill-opacity="0.92" stroke="#1f77b4" stroke-width="0.4"/>
<circle cx="468.5" cy="176.5" r="1.2" fill="#e3202e" fill-opacity="0.92" stroke="#e3202e" stroke-width="0.4"/>
<circle cx="469.4" cy="177.8" r="1.2" fill="#e3202e" fill-opacity="0.92" stroke="#e3202e" stroke-width="0.4"/>
<circle cx="497.3" cy="167.5" r="1.2" fill="#de6b0e" fill-opacity="0.92" stroke="#de6b0e" stroke-width="0.4"/>
<circle cx="498.2" cy="213.1" r="1.2" fill="#e3202e" fill-opacity="0.92" stroke="#e3202e" stroke-width="0.4"/>
<circle cx="460.7" cy="230.5" r="1.2" fill="#de6b0e" fill-opacity="0.92" stroke="#de6b0e" stroke-width="0.4"/>
<circle cx="490.9" cy="234.2" r="1.2" fill="#17a673" fill-opacity="0.92" stroke="#17a673" stroke-width="0.4"/>
<circle cx="396" cy="145.8" r="1.9" fill="#e3202e"/>
<circle cx="412.8" cy="205.6" r="1.3" fill="#de6b0e"/>
<circle cx="507.8" cy="252.8" r="1.4" fill="#8a6d4a"/></g>
</svg>

<!-- Legend: Projektstatus -->
<div class="abs lgb" id="lg0" style="left:196.2px;top:281.57px">Projektstatus</div>
<div class="abs lg" id="lg1" style="left:204.7px;top:292.56px">Geplant</div>
<div class="abs lg" id="lg2" style="left:204.7px;top:304.36px">In Betrieb</div>
<div class="abs lg" id="lg3" style="left:204.7px;top:315.86px">Im Bau</div>
<div class="abs lg" id="lg4" style="left:204.7px;top:327.06px">Projekt</div>
<div class="abs lg" id="lg5" style="left:196.2px;top:337.66px">angekündigt</div>
<div class="abs lg" id="lg6" style="left:204.7px;top:349.36px">Unbekannt</div>
<div class="dot" style="left:196.2px;top:295.3px;background:#1f77b4"></div>
<div class="dot" style="left:196.2px;top:307.1px;background:#de6d10"></div>
<div class="dot" style="left:196.2px;top:318.6px;background:#1aa672"></div>
<div class="dot" style="left:196.2px;top:329.8px;background:#e0202c"></div>
<div class="dot" style="left:196.2px;top:352.1px;background:#ffd42a"></div>

<!-- Legend: Thermische Leistung -->
<div class="abs lgb" id="tl0" style="left:580px;top:255.68px">Thermische Leistung</div>
<svg class="abs" style="left:580px;top:270px" width="40" height="120" viewBox="580 270 40 120">
  <g fill="#d4d4d4" stroke="#9a9a9a" stroke-width="0.5">
    <circle cx="597" cy="282.4" r="0.9"/>
    <circle cx="597" cy="296.8" r="2.6"/>
    <circle cx="597" cy="311.2" r="4.1"/>
    <circle cx="597" cy="325.8" r="5.6"/>
    <circle cx="597" cy="340.1" r="6.7"/>
    <circle cx="597" cy="356.3" r="7.9"/>
    <circle cx="597" cy="375.2" r="9.3"/>
  </g>
</svg>
<div class="abs lg" id="tl1" style="font-size:9.65px;left:615.2px;top:277.63px">≤ 1MW</div>
<div class="abs lg" id="tl2" style="font-size:9.65px;left:615.2px;top:292.73px">5 MW</div>
<div class="abs lg" id="tl3" style="font-size:9.65px;left:615.2px;top:306.63px">10 MW</div>
<div class="abs lg" id="tl4" style="font-size:9.65px;left:615.2px;top:321.53px">15 MW</div>
<div class="abs lg" id="tl5" style="font-size:9.65px;left:615.2px;top:336.13px">20 MW</div>
<div class="abs lg" id="tl6" style="font-size:9.65px;left:615.2px;top:351.93px">25 MW</div>
<div class="abs lg" id="tl7" style="font-size:9.65px;left:615.2px;top:370.83px">30 MW</div>
</div>
</body>
</html>
